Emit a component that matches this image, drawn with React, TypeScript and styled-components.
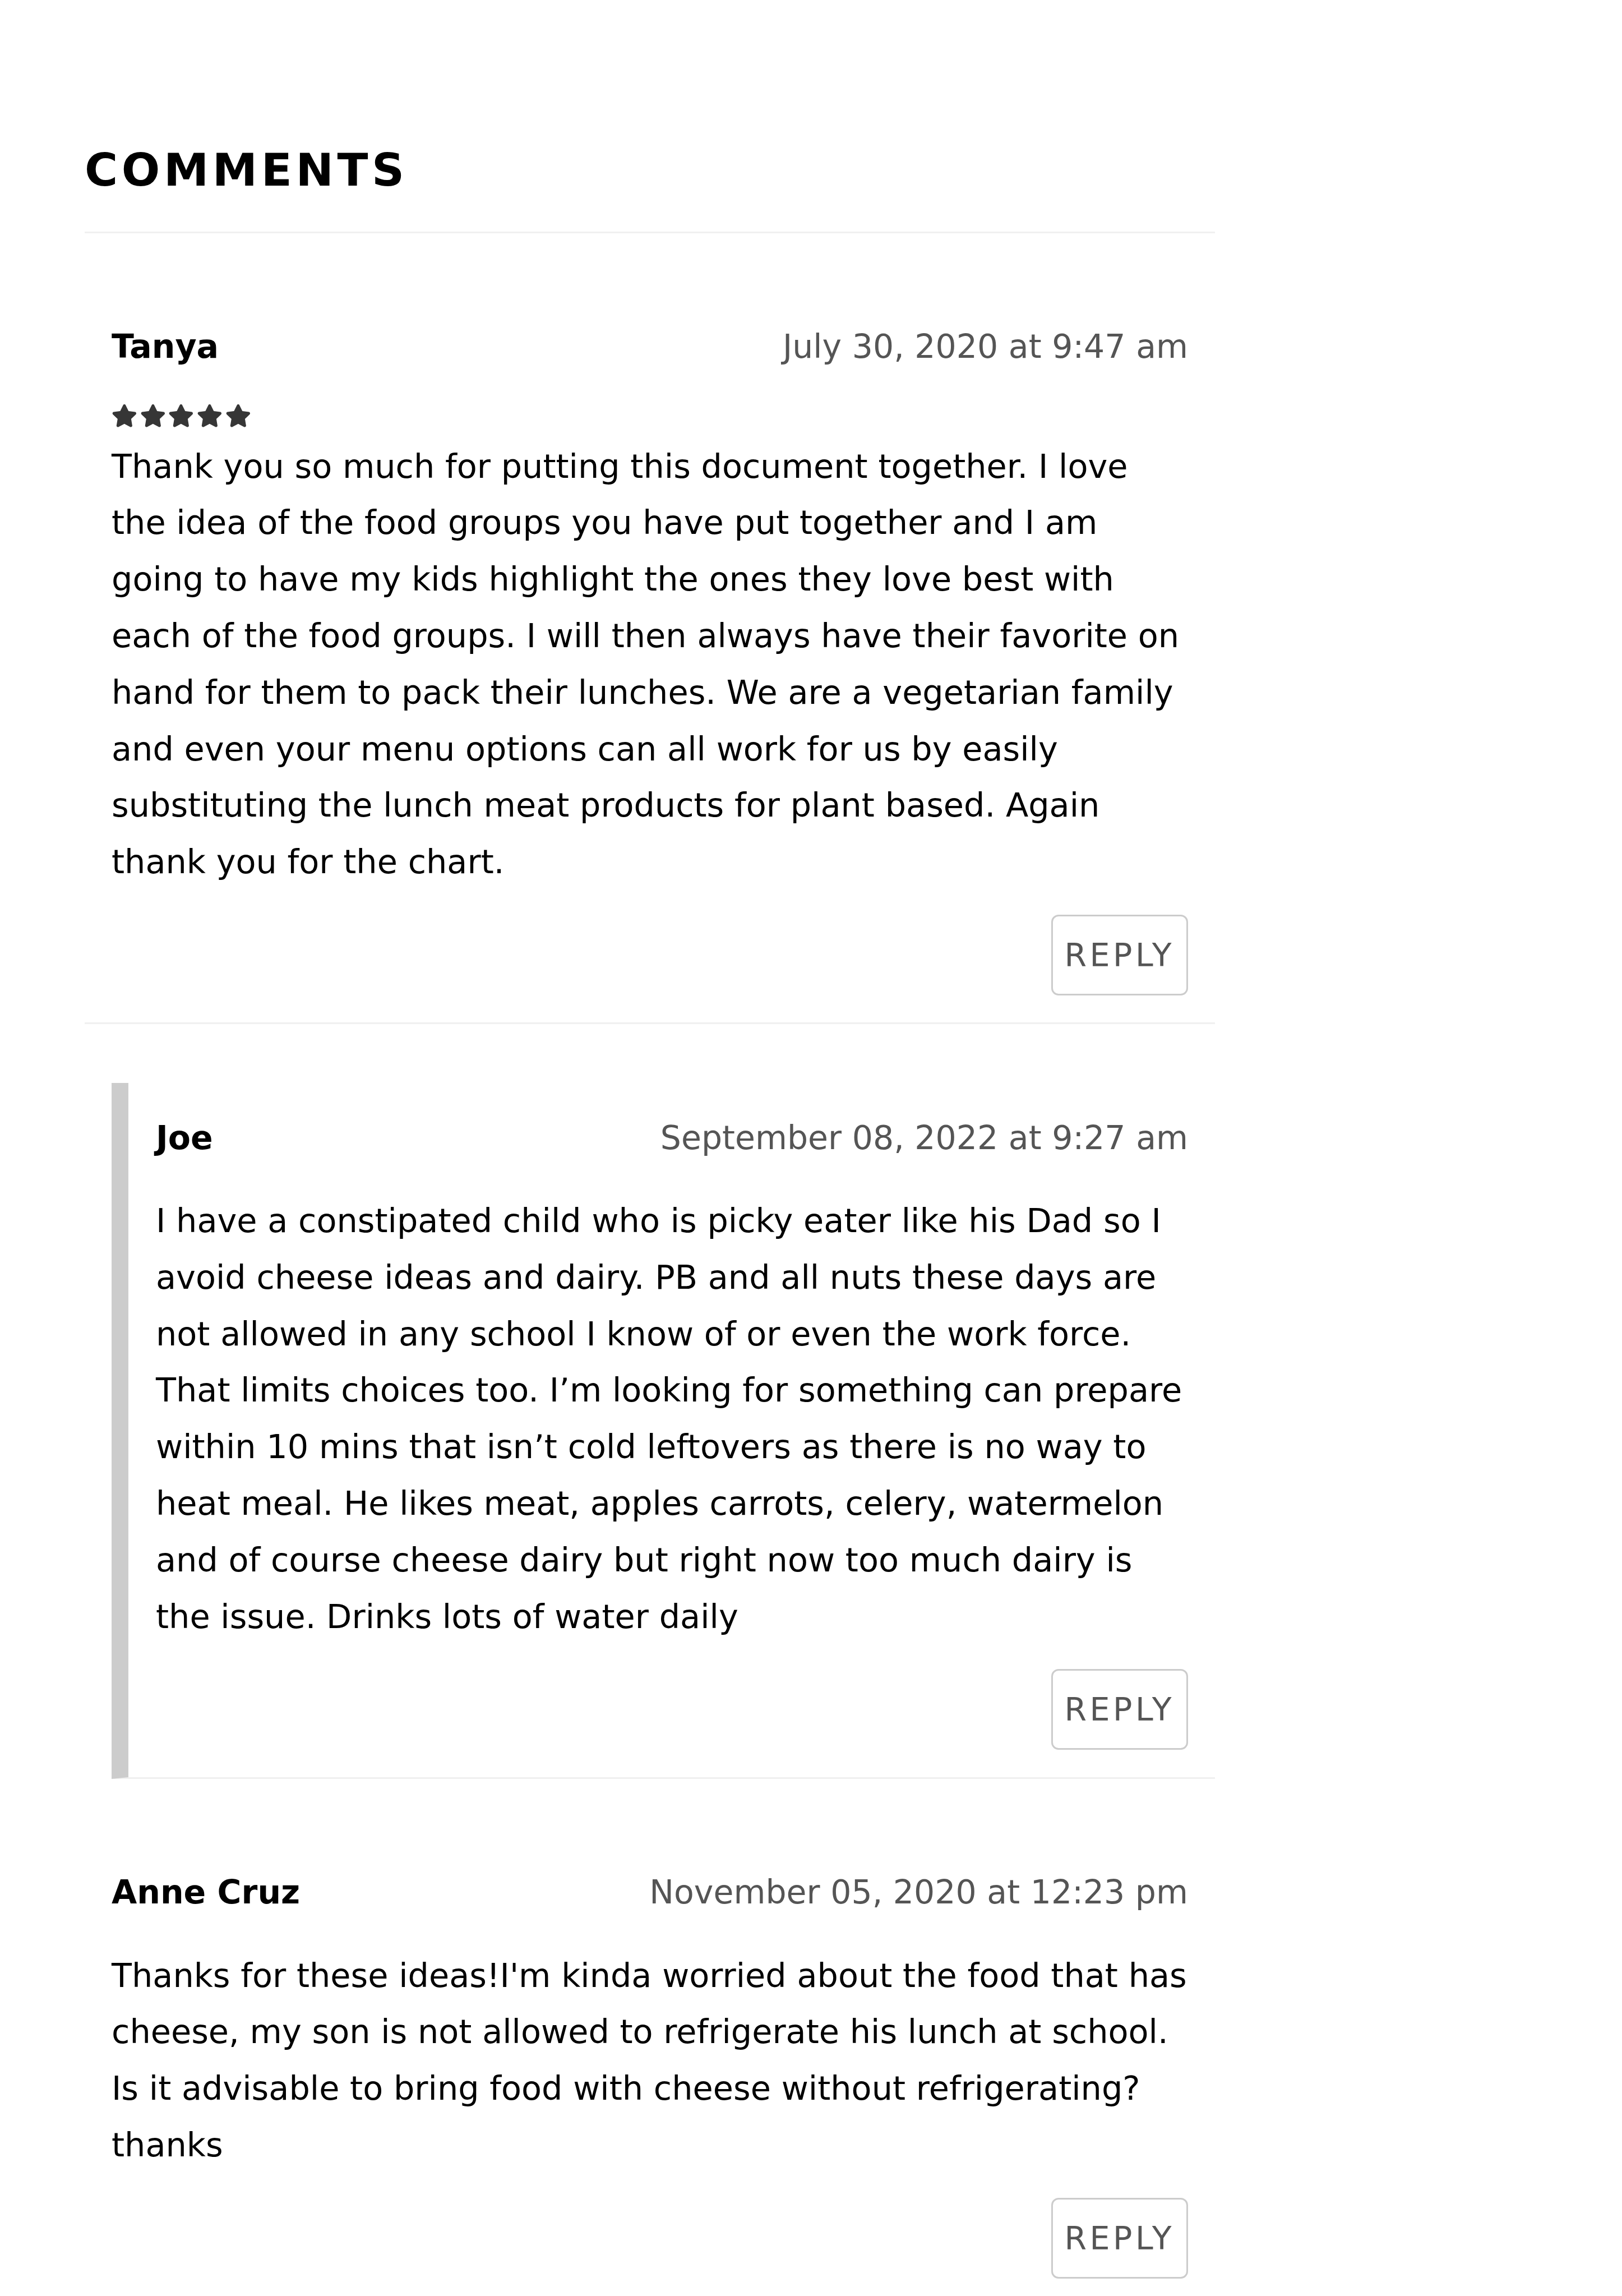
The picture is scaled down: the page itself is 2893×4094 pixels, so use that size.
import React from "react";
import styled, { createGlobalStyle } from "styled-components";
import { FaStar } from "react-icons/fa";

const GlobalStyle = createGlobalStyle`
  html, body {
    margin: 0;
    padding: 0;
    background: #ffffff;
  }
  body {
    font-family: "DejaVu Sans", "Liberation Sans", sans-serif;
    color: #000000;
  }
`;

const Page = styled.section`
  width: 2016px;
  margin-left: 151px;
  padding-top: 254.7px;
  box-sizing: content-box;
`;

const Heading = styled.h2`
  margin: 0;
  font-family: "DejaVu Sans", sans-serif;
  font-weight: 700;
  font-size: 80.67px;
  line-height: 96.8px;
  letter-spacing: 6.6px;
  text-transform: uppercase;
  color: #000;
  padding-bottom: 61.5px;
  border-bottom: 3px solid #f0f0f0;
`;

const List = styled.div`
  display: flex;
  flex-direction: column;
`;

const CommentItem = styled.article<{ $reply?: boolean }>`
  margin-top: 105px;
  margin-left: ${(p) => (p.$reply ? "48px" : "0")};
  padding: 47.3px 48px 48.5px ${(p) => (p.$reply ? "49px" : "48px")};
  border-left: ${(p) => (p.$reply ? "30px solid #cccccc" : "none")};
  border-bottom: 3px solid #f0f0f0;
`;

const Header = styled.header`
  display: flex;
  justify-content: space-between;
  align-items: baseline;
  font-size: 58.5px;
  line-height: 100.8px;
  margin-bottom: 47.5px;
`;

const Author = styled.span`
  font-weight: 700;
  color: #000;
`;

const DateText = styled.time`
  color: #555555;
  font-weight: 400;
`;

const Stars = styled.div`
  display: flex;
  gap: 5px;
  height: 65px;
  padding-top: 4.5px;
  box-sizing: border-box;
  color: #363636;
`;

const Body = styled.p`
  margin: 0;
  font-size: 58.9px;
  line-height: 100.8px;
  color: #000;
`;

const Actions = styled.div`
  display: flex;
  justify-content: flex-end;
  margin-top: 43px;
`;

const ReplyButton = styled.button`
  display: inline-flex;
  align-items: center;
  justify-content: center;
  box-sizing: border-box;
  height: 144px;
  padding: 0 21px;
  background: #ffffff;
  border: 3px solid #cccccc;
  border-radius: 13px;
  font-family: "DejaVu Sans", sans-serif;
  font-size: 57px;
  letter-spacing: 5.5px;
  color: #555555;
  text-transform: uppercase;
  cursor: pointer;
`;

type Comment = {
  author: string;
  date: string;
  rating?: number;
  text: string;
  reply?: boolean;
};

const comments: Comment[] = [
  {
    author: "Tanya",
    date: "July 30, 2020 at 9:47 am",
    rating: 5,
    text: "Thank you so much for putting this document together. I love the idea of the food groups you have put together and I am going to have my kids highlight the ones they love best with each of the food groups. I will then always have their favorite on hand for them to pack their lunches. We are a vegetarian family and even your menu options can all work for us by easily substituting the lunch meat products for plant based. Again thank you for the chart.",
  },
  {
    author: "Joe",
    date: "September 08, 2022 at 9:27 am",
    reply: true,
    text: "I have a constipated child who is picky eater like his Dad so I avoid cheese ideas and dairy. PB and all nuts these days are not allowed in any school I know of or even the work force. That limits choices too. I\u2019m looking for something can prepare within 10 mins that isn\u2019t cold leftovers as there is no way to heat meal. He likes meat, apples carrots, celery, watermelon and of course cheese dairy but right now too much dairy is the issue. Drinks lots of water daily",
  },
  {
    author: "Anne Cruz",
    date: "November 05, 2020 at 12:23 pm",
    text: "Thanks for these ideas!I'm kinda worried about the food that has cheese, my son is not allowed to refrigerate his lunch at school. Is it advisable to bring food with cheese without refrigerating? thanks",
  },
];

export default function App() {
  return (
    <>
      <GlobalStyle />
      <Page>
        <Heading>Comments</Heading>
        <List>
          {comments.map((c) => (
            <CommentItem key={c.author} $reply={c.reply}>
              <Header>
                <Author>{c.author}</Author>
                <DateText>{c.date}</DateText>
              </Header>
              {c.rating ? (
                <Stars>
                  {Array.from({ length: c.rating }).map((_, i) => (
                    <FaStar key={i} style={{ width: 45.7, height: 40.6 }} />
                  ))}
                </Stars>
              ) : null}
              <Body>{c.text}</Body>
              <Actions>
                <ReplyButton>Reply</ReplyButton>
              </Actions>
            </CommentItem>
          ))}
        </List>
      </Page>
    </>
  );
}
